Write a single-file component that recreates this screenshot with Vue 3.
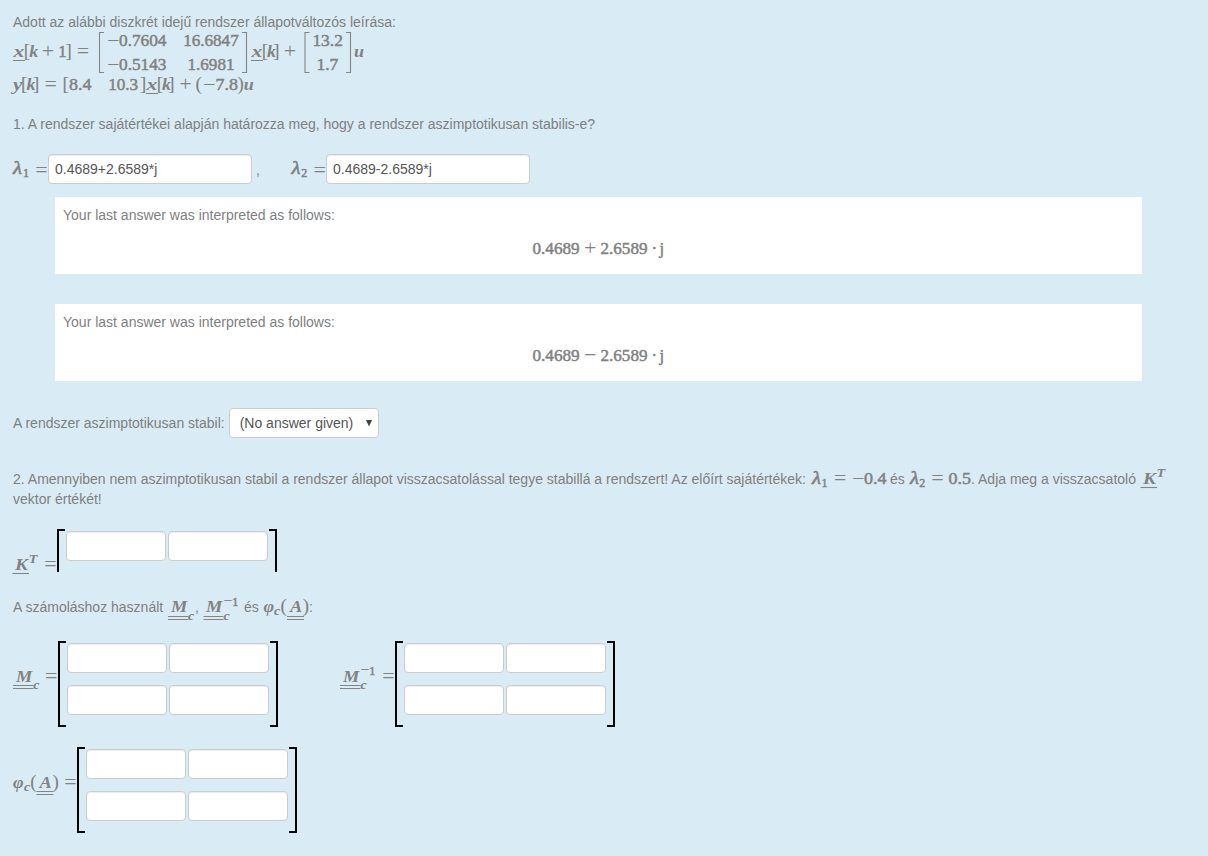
<script setup>
import { h } from 'vue'

// Formula tokens: [text, x, baseline, class, width?]; rules: SVG path strings.
const formulas = {
  state: {
    box: [12, 32, 360, 43],
    tokens: [
      ['x', 13.5, 57, 'v'], ['[', 23.7, 57, 'b'], ['k', 29.2, 57, 'v'], ['+', 41.8, 58, 'o'],
      ['1', 58.2, 57, 'n'], [']', 65.5, 57, 'b'], ['=', 76.8, 58, 'o'],
      ['−', 107, 46, 'm', 12.4], ['0.7604', 119, 46, 'n', 47.5], ['16.6847', 183.2, 46, 'n', 55.5],
      ['−', 107, 70, 'm', 12.4], ['0.5143', 119, 70, 'n', 47.5], ['1.6981', 187.5, 70, 'n', 47],
      ['x', 251.5, 57, 'v'], ['[', 261.7, 57, 'b'], ['k', 267, 57, 'v'], [']', 273.3, 57, 'b'],
      ['+', 283.8, 58, 'o'], ['13.2', 312.4, 46, 'n', 30.5], ['1.7', 316.4, 70, 'n', 22],
      ['u', 354, 57, 'v']
    ],
    rules: 'M13 60.5H25M251 60.5H263M104 32.5H99.5V72.5H104M242 32.5H246.5V72.5H242M309.5 32.5H305V72.5H309.5M346 32.5H350.5V72.5H346'
  },
  output: {
    box: [12, 75, 260, 20],
    tokens: [
      ['y', 13, 90, 'v'], ['[', 21, 90, 'b'], ['k', 26.5, 90, 'v'], [']', 33, 90, 'b'],
      ['=', 44.5, 91, 'o'], ['[', 62.5, 90, 'b'], ['8.4', 69, 90, 'n', 22.5],
      ['10.3', 108.2, 90, 'n', 30], [']', 140, 90, 'b'], ['x', 146.5, 90, 'v'],
      ['[', 156.7, 90, 'b'], ['k', 162, 90, 'v'], [']', 168.3, 90, 'b'], ['+', 179.3, 91, 'o'],
      ['(', 195.5, 90, 'b'], ['−', 203, 90, 'm', 12.4], ['7.8', 215.5, 90, 'n', 22.5],
      [')', 237.6, 90, 'b'], ['u', 243.7, 90, 'v']
    ],
    rules: 'M146 93.5H158'
  },
  lambda1: {
    box: [12, 154, 36, 30],
    tokens: [['λ', 13, 174, 'g'], ['1', 23, 177, 's'], ['=', 35.3, 176.5, 'o']]
  },
  lambda2: {
    box: [290, 154, 36, 30],
    tokens: [['λ', 291.5, 174, 'g'], ['2', 301.3, 177, 's'], ['=', 313.5, 176.5, 'o']]
  },
  plus: {
    box: [532, 238, 134, 22],
    tokens: [['0.4689', 532.5, 254, 'n', 47.2], ['+', 584, 255.3, 'o'], ['2.6589', 600.5, 254, 'n', 47], ['·', 651.5, 254, 'n'], ['j', 659.5, 254, 'n']]
  },
  minus: {
    box: [532, 238, 134, 22],
    tokens: [['0.4689', 532.5, 254, 'n', 47.2], ['−', 584, 255.3, 'o'], ['2.6589', 600.5, 254, 'n', 47], ['·', 651.5, 254, 'n'], ['j', 659.5, 254, 'n']]
  },
  target1: {
    box: [811, 469, 75, 20],
    tokens: [['λ', 812, 484, 'g'], ['1', 821.5, 487, 's'], ['=', 834, 485.3, 'o'], ['−', 852, 484, 'm', 12.4], ['0.4', 864, 484, 'n', 22.5]]
  },
  target2: {
    box: [909, 469, 62, 20],
    tokens: [['λ', 910, 484, 'g'], ['2', 919.3, 487, 's'], ['=', 931.3, 485.3, 'o'], ['0.5', 948.5, 484, 'n', 22.5]]
  },
  gainInline: {
    box: [1140, 469, 28, 20],
    tokens: [['K', 1143, 484, 'v'], ['T', 1156.5, 477, 't']],
    rules: 'M1140.5 487.5H1157'
  },
  gain: {
    box: [12, 529, 45, 48],
    tokens: [['K', 15, 570, 'v'], ['T', 28.7, 562.5, 't'], ['=', 44.3, 571, 'o']],
    rules: 'M12.5 573.5H29'
  },
  mcInline: {
    box: [168, 597, 26, 24],
    tokens: [['M', 171, 612, 'v'], ['c', 188, 620, 't']],
    rules: 'M168 616.5H188.5M168 619.5H188.5'
  },
  mcInvInline: {
    box: [203, 592, 36, 29],
    tokens: [['M', 206, 612, 'v'], ['c', 223.5, 620, 't'], ['−', 223.3, 606, 'm'], ['1', 232.3, 605.5, 's']],
    rules: 'M203.5 616.5H223.5M203.5 619.5H223.5'
  },
  phiInline: {
    box: [263, 597, 46, 24],
    tokens: [['φ', 263.5, 612, 'v'], ['c', 274, 614.5, 't'], ['(', 280.5, 612, 'b'], ['A', 290, 612, 'v'], [')', 302.7, 612, 'b']],
    rules: 'M287 616.5H304M287 619.5H304'
  },
  mc: {
    box: [12, 641, 46, 86],
    tokens: [['M', 16, 682, 'v'], ['c', 33.3, 689, 't'], ['=', 45, 683, 'o']],
    rules: 'M13 685.5H33.5M13 688.5H33.5'
  },
  mcInv: {
    box: [340, 641, 55, 86],
    tokens: [['M', 343, 682, 'v'], ['c', 360.5, 689, 't'], ['−', 360.3, 675, 'm'], ['1', 369.3, 674.5, 's'], ['=', 382.3, 683, 'o']],
    rules: 'M340 685.5H360.5M340 688.5H360.5'
  },
  phi: {
    box: [12, 747, 65, 86],
    tokens: [['φ', 13, 788, 'v'], ['c', 24, 790.5, 't'], ['(', 30.3, 788, 'b'], ['A', 39.5, 788, 'v'], [')', 52.5, 788, 'b'], ['=', 64.3, 789, 'o']],
    rules: 'M36.5 791.5H53.5M36.5 794.5H53.5'
  }
}

// Advance widths of the variable letters.
const letterWidths = { x: 10.8, k: 9, y: 9.3, u: 10, K: 13, M: 16.3, A: 12.3, φ: 10.6, λ: 9, c: 6.2, T: 8.6 }

const Formula = ({ name }) => {
  const f = formulas[name]
  return h('svg', { class: 'formula', width: f.box[2], height: f.box[3], viewBox: f.box.join(' ') }, [
    ...f.tokens.map(([text, x, y, cls, width = letterWidths[text]]) =>
      h('text', { x, y, class: cls, ...(width ? { textLength: width, lengthAdjust: 'spacingAndGlyphs' } : {}) }, text)),
    f.rules ? h('path', { d: f.rules }) : null
  ])
}
Formula.props = ['name']
</script>

<template>
  <main class="question">
    <p class="line">Adott az alábbi diszkrét idejű rendszer állapotváltozós leírása:</p>
    <Formula name="state" />
    <Formula name="output" />
    <p class="line task">1. A rendszer sajátértékei alapján határozza meg, hogy a rendszer aszimptotikusan stabilis-e?</p>

    <div class="row eigen">
      <Formula name="lambda1" /><input class="field wide" value="0.4689+2.6589*j">
      <span class="comma">,</span>
      <Formula name="lambda2" /><input class="field wide" value="0.4689-2.6589*j">
    </div>

    <section v-for="name in ['plus', 'minus']" :key="name" class="feedback">
      <p class="line">Your last answer was interpreted as follows:</p>
      <Formula :name="name" />
    </section>

    <div class="row stable">
      <span>A rendszer aszimptotikusan stabil:</span>
      <div class="select"><span>(No answer given)</span>
        <svg width="6" height="7" viewBox="0 0 6 7"><path d="M0 0H6L3 6.5Z" /></svg>
      </div>
    </div>

    <div class="row para">
      <span class="intro">2. Amennyiben nem aszimptotikusan stabil a rendszer állapot visszacsatolással tegye stabillá a rendszert! Az előírt sajátértékek:</span>
      <Formula name="target1" /><span class="and">és</span><Formula name="target2" />
      <span class="adja">. Adja meg a visszacsatoló</span><Formula name="gainInline" />
    </div>
    <p class="line">vektor értékét!</p>

    <div class="row gain">
      <Formula name="gain" />
      <div class="matrix open"><input v-for="i in 2" :key="i" class="field"></div>
    </div>

    <div class="row used">
      <span class="used-label">A számoláshoz használt</span><Formula name="mcInline" />
      <span class="sep">,</span><Formula name="mcInvInline" /><span class="es">és</span><Formula name="phiInline" /><span class="colon">:</span>
    </div>

    <div class="row matrices">
      <Formula name="mc" />
      <div class="matrix"><input v-for="i in 4" :key="i" class="field"></div>
      <Formula name="mcInv" class="second" />
      <div class="matrix"><input v-for="i in 4" :key="i" class="field"></div>
    </div>
    <div class="row phi">
      <Formula name="phi" />
      <div class="matrix"><input v-for="i in 4" :key="i" class="field"></div>
    </div>
  </main>
</template>

<style>
body { background: #d9ecf5; }
.formula { display: block; flex: none; overflow: visible; }
.formula text {
  font: 16.7px "Liberation Serif", serif;
  fill: #828282; stroke: #828282; stroke-width: .5px;
}
.formula path { fill: none; stroke: #858585; stroke-width: 1.1px; }
.formula .v { font-style: italic; font-weight: bold; font-size: 17px; stroke-width: 0; }
.formula .g { font-style: italic; font-size: 18px; stroke-width: .6px; }
.formula .b { font-size: 19px; stroke-width: .1px; }
.formula .o { font-size: 22px; stroke-width: 0; }
.formula .m { font-size: 16.5px; stroke-width: 0; }
.formula .s { font-size: 12px; }
.formula .t { font-size: 12.5px; font-style: italic; font-weight: bold; stroke-width: 0; }
</style>

<style scoped>
.question {
  box-sizing: border-box; width: 1208px; height: 856px; padding: 12px 0 0 12px;
  overflow: hidden; background: #d9ecf5; color: #7f7f7f;
  font: 14px/20px "Liberation Sans", Arial, sans-serif;
}
.line { margin: 0; white-space: nowrap; padding-left: 1px; }
.task { margin-top: 19px; }
.row { display: flex; white-space: nowrap; }
.eigen { margin-top: 20px; height: 43px; }
.comma { width: 38px; box-sizing: border-box; padding: 6px 0 0 4px; }
.field {
  display: block; box-sizing: border-box; width: 100px; height: 30px; margin: 0; padding: 4px 6px;
  border: 1px solid #ccc; border-radius: 4px; background: #fff; color: #555;
  box-shadow: inset 0 1px 1px rgba(0, 0, 0, .075);
  font: 14px/20px "Liberation Sans", Arial, sans-serif; outline: 0;
}
.wide { width: 204px; }
.feedback {
  display: flex; flex-direction: column; box-sizing: border-box;
  width: 1087px; height: 77px; margin: 0 0 30px 43px; padding: 8px; background: #fff;
}
.feedback .line { padding: 0; }
.feedback .formula { align-self: center; margin-top: 13px; }
.stable { align-items: center; height: 30px; margin-top: -3px; padding-left: 1px; }
.select {
  display: flex; align-items: center; justify-content: space-between; box-sizing: border-box;
  width: 150px; height: 30px; margin-left: 4px; padding: 0 6px 0 10px;
  border: 1px solid #ccc; border-radius: 4px; background: #fff; color: #555;
}
.select path { fill: #444; }
.para { height: 20px; margin-top: 31px; padding-left: 1px; }
.intro { width: 798px; }
.and { width: 23px; box-sizing: border-box; padding-left: 4px; }
.adja { width: 169px; }
.gain { margin-top: 20px; height: 68px; }
.matrix {
  position: relative; display: grid; grid-template-columns: 100px 100px; align-content: start;
  gap: 12px 2px; box-sizing: border-box; width: 220px; height: 86px; padding: 2px 9px;
}
.matrix::before, .matrix::after {
  content: ""; position: absolute; top: 0; bottom: 0; width: 8px; box-sizing: border-box;
  border: 2px solid #000;
}
.matrix::before { left: 0; border-right: 0; }
.matrix::after { right: 0; border-left: 0; }
.open { height: 43px; }
.open::before, .open::after { border-bottom: 0; }
.used { height: 44px; }
.used .formula { align-self: flex-start; }
.used-label { width: 156px; box-sizing: border-box; padding-left: 1px; }
.sep { width: 9px; box-sizing: border-box; padding-left: 1px; }
.used .sep + .formula { margin-top: -5px; }
.es { width: 24px; box-sizing: border-box; padding-left: 5px; }
.matrices { height: 106px; }
.second { margin-left: 62px; }
</style>
